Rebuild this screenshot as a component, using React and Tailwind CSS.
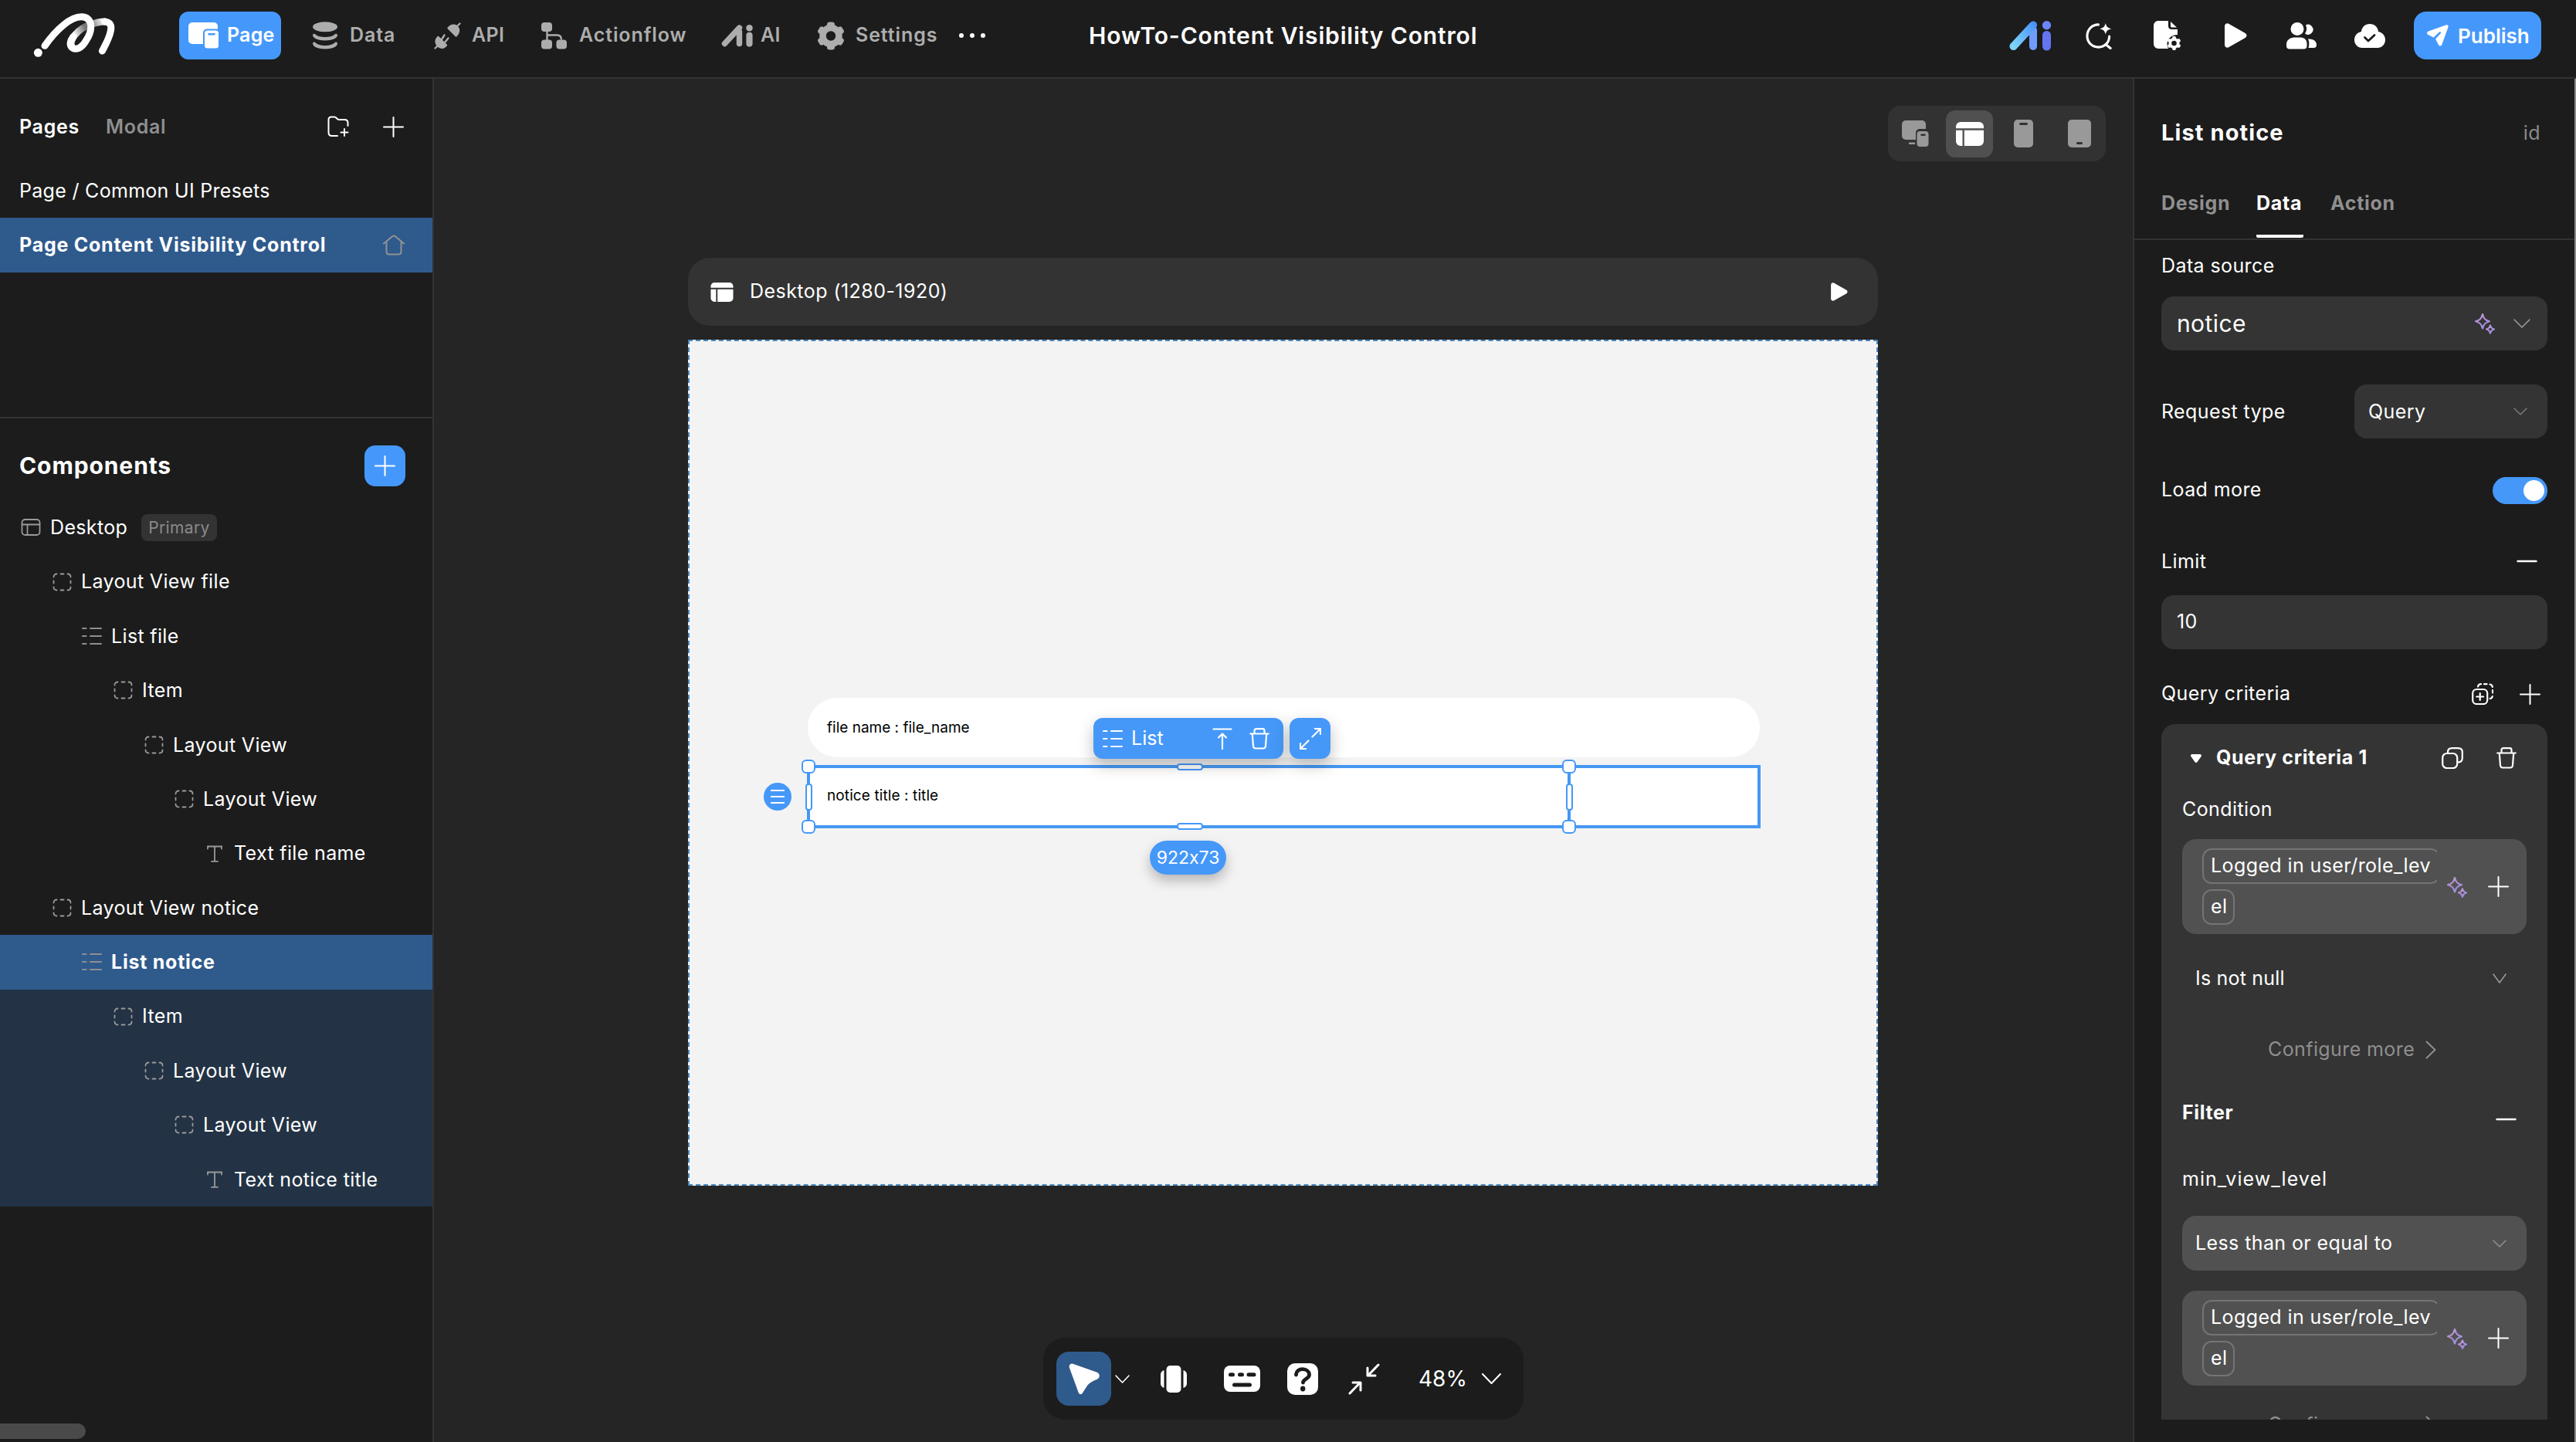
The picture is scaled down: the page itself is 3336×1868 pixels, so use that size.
import React from 'react';

const TREE = [
  { label: 'Desktop', icon: 'desktop', pad: 'pl-[27px]', badge: 'Primary' },
  { label: 'Layout View file', icon: 'view', pad: 'pl-[67px]' },
  { label: 'List file', icon: 'list', pad: 'pl-[106px]' },
  { label: 'Item', icon: 'view', pad: 'pl-[146px]' },
  { label: 'Layout View', icon: 'view', pad: 'pl-[186px]' },
  { label: 'Layout View', icon: 'view', pad: 'pl-[225px]' },
  { label: 'Text file name', icon: 'text', pad: 'pl-[265px]' },
  { label: 'Layout View notice', icon: 'view', pad: 'pl-[67px]' },
  { label: 'List notice', icon: 'list', pad: 'pl-[106px]', state: 'active' },
  { label: 'Item', icon: 'view', pad: 'pl-[146px]', state: 'child' },
  { label: 'Layout View', icon: 'view', pad: 'pl-[186px]', state: 'child' },
  { label: 'Layout View', icon: 'view', pad: 'pl-[225px]', state: 'child' },
  { label: 'Text notice title', icon: 'text', pad: 'pl-[265px]', state: 'child' },
];

const ROW_STYLES = {
  active: 'bg-[#2f5a8c] font-bold tracking-[0.75px]',
  child: 'bg-[#233345]',
};

/* ---------- icons ---------- */

function Plus({ className = '', size = 27, width = 2 }) {
  return (
    <svg className={`shrink-0 ${className}`} width={size} height={size} viewBox="0 0 27 27" fill="none" stroke="currentColor" strokeWidth={width} strokeLinecap="round">
      <path d="M13.5 1v25M1 13.5h25" />
    </svg>
  );
}

function Minus({ className = '' }) {
  return (
    <svg className={`shrink-0 ${className}`} width="27" height="4" viewBox="0 0 27 4" stroke="currentColor" strokeWidth="2.4" strokeLinecap="round">
      <path d="M1.5 2h24" />
    </svg>
  );
}

function Chevron({ className = '', w = 18, h = 10, width = 1.6 }) {
  return (
    <svg className={`shrink-0 ${className}`} width={w} height={h} viewBox={`0 0 ${w} ${h}`} fill="none" stroke="currentColor" strokeWidth={width} strokeLinecap="round" strokeLinejoin="round">
      <path d={`M1 1L${w / 2} ${h - 1}L${w - 1} 1`} />
    </svg>
  );
}

function Sparkles({ className = '' }) {
  return (
    <svg className={`shrink-0 ${className}`} width="28" height="28" viewBox="0 0 28 28" fill="none" stroke="url(#spark)" strokeWidth="2.2" strokeLinejoin="round">
      <defs>
        <linearGradient id="spark" x1="0" y1="0" x2="0.6" y2="1">
          <stop offset="0" stopColor="#c2b4ea" />
          <stop offset="0.45" stopColor="#b18ad0" />
          <stop offset="1" stopColor="#9c93e6" />
        </linearGradient>
      </defs>
      <path d="M11 2C12.3 7.8 14.5 10 20 11.3C14.5 12.6 12.3 15 11 20.5C9.7 15 7.5 12.6 2 11.3C7.5 10 9.7 7.8 11 2Z" />
      <path d="M21 16.5C21.8 19.5 22.8 20.7 26 21.5C22.8 22.3 21.8 23.7 21 26.6C20.2 23.7 19.2 22.3 16 21.5C19.2 20.7 20.2 19.5 21 16.5Z" />
    </svg>
  );
}

function Trash({ className = '' }) {
  return (
    <svg className={`shrink-0 ${className}`} width="26" height="28" viewBox="0 0 26 28" fill="none" stroke="currentColor" strokeWidth="2.2" strokeLinecap="round" strokeLinejoin="round">
      <path d="M1.2 7.5h23.6M6.5 7V3.5C6.5 2 7.500 1.200 9 1.200h8c1.500 0 2.500.8 2.500 2.300V7M3.800 8l1.200 15.500c.2 2 1.300 3 3.200 3h9.600c1.900 0 3-1 3.200-3L22.200 8" />
    </svg>
  );
}

function ListLines({ className = '', size = 26 }) {
  return (
    <svg className={`shrink-0 ${className}`} width={size} height={size} viewBox="0 0 26 26" stroke="currentColor" strokeWidth="2" strokeLinecap="round">
      <path d="M1 3h4.500M11 3h14M1 13h4.500M11 13h14M1 23h4.500M11 23h14" />
    </svg>
  );
}

function TreeIcon({ name }) {
  if (name === 'list') return <ListLines className="text-[#8f8f8f]" />;
  return (
    <svg className="shrink-0 text-[#9a9a9a]" width="26" height="26" viewBox="0 0 26 26" fill="none" stroke="currentColor" strokeWidth="1.8" strokeLinecap="round">
      {name === 'desktop' && (
        <>
          <rect x="1.500" y="3" width="23" height="20" rx="4" />
          <path d="M1.500 9.500h23M8.500 9.500V23" />
        </>
      )}
      {name === 'view' && (
        <path d="M2.500 6.500c0-2.500 1.500-4 4-4M11.500 2.500h4M20.500 2.500c2.500 0 4 1.500 4 4M24.500 11.500v3M24.500 19.500c0 2.500-1.500 4-4 4M15.500 23.500h-4M6.500 23.500c-2.500 0-4-1.500-4-4M2.500 14.500v-3" />
      )}
      {name === 'text' && <path d="M4 6.500V3.500h18v3M13 3.500v19M9 22.800h8" />}
    </svg>
  );
}

function Logo() {
  return (
    <svg className="shrink-0" width="107" height="60" viewBox="67 50 321 180" fill="none" strokeLinecap="round" strokeWidth="27">
      <defs>
        <linearGradient id="fold" gradientUnits="userSpaceOnUse" x1="230" y1="150" x2="345" y2="90">
          <stop offset="0" stopColor="#fff" />
          <stop offset="0.4" stopColor="#777" />
          <stop offset="0.6" stopColor="#777" />
          <stop offset="1" stopColor="#fff" />
        </linearGradient>
      </defs>
      <path d="M217 182C202 162 240 112 290 98C305 92 325 86 345 86" stroke="url(#fold)" />
      <path d="M345 86C368 88 372 103 368 122C363 150 350 172 335 200" stroke="#fff" />
      <path d="M112 180C155 118 215 62 262 68C300 74 298 122 272 160C255 190 232 198 218 187C206 176 212 158 222 145" stroke="#fff" />
      <circle cx="86" cy="207" r="16.500" fill="#fff" />
    </svg>
  );
}

function AiMark({ w, h, colored }) {
  return (
    <svg className="shrink-0" width={w} height={h} viewBox="0 0 54 39" fill="none" strokeLinecap="round" strokeWidth="10">
      {colored && (
        <defs>
          <linearGradient id="aiSlant" gradientUnits="userSpaceOnUse" x1="5" y1="34" x2="33" y2="5">
            <stop offset="0" stopColor="#7fd6fb" />
            <stop offset="1" stopColor="#4a93f8" />
          </linearGradient>
        </defs>
      )}
      <path d="M31 12V33" stroke={colored ? '#6f9cfa' : 'currentColor'} />
      <path d="M5.500 33L31 5.500" stroke={colored ? 'url(#aiSlant)' : 'currentColor'} />
      <path d="M48.500 18.500V33" strokeWidth="11" stroke={colored ? '#6474f2' : 'currentColor'} />
      <circle cx="48.500" cy="5.800" r="5.700" fill={colored ? '#6a86f6' : 'currentColor'} />
    </svg>
  );
}

function PageIcon() {
  return (
    <svg className="shrink-0" width="40" height="34" viewBox="0 0 40 34" fill="currentColor">
      <path d="M5 0h28a5 5 0 0 1 5 5v3.500H24a5 5 0 0 0-5 5V28H5a5 5 0 0 1-5-5V5a5 5 0 0 1 5-5Z" />
      <path fillRule="evenodd" d="M24.500 10.500h11a3.500 3.500 0 0 1 3.500 3.500v16a3.500 3.500 0 0 1-3.500 3.500h-11a3.500 3.500 0 0 1-3.500-3.500V14a3.500 3.500 0 0 1 3.500-3.500Zm2 3.500a1.300 1.300 0 0 0 0 2.600h7a1.300 1.300 0 0 0 0-2.600Z" />
    </svg>
  );
}

function DataIcon() {
  return (
    <svg width="32" height="36" viewBox="0 0 32 36" fill="currentColor">
      <ellipse cx="16" cy="6.800" rx="16" ry="6.500" />
      <path d="M2.800 16C6 19.200 11 20 16 20s10-.8 13.200-4c1.300-.6 2.800.2 2.800 1.500C32 21.500 25 24.500 16 24.500S0 21.500 0 17.500C0 16.200 1.500 15.400 2.800 16Z" />
      <path d="M2.800 26.800C6 30 11 31 16 31s10-1 13.200-4.200c1.300-.6 2.800.2 2.800 1.500C32 32.500 25 35.500 16 35.500S0 32.500 0 28.300C0 27 1.500 26.200 2.800 26.800Z" />
    </svg>
  );
}

function ApiIcon() {
  return (
    <svg width="35" height="35" viewBox="0 0 35 35" fill="currentColor" stroke="currentColor" strokeLinecap="round" strokeLinejoin="round" strokeWidth="2.400">
      <path d="M1.500 33.500L6 29M29.500 5.500L33.500 1.500" fill="none" />
      <path d="M5.500 19L16 29.500C12.500 34 8 33.500 5 30.500C2 27.500 1.500 22.500 5.500 19Z" />
      <path d="M10 22L13.500 16.500M14 26L18.500 20.500" fill="none" />
      <path d="M18.500 7.500L28.500 17.500C33 13.500 33 8.500 30 5.500C27 2.500 22 3 18.500 7.500Z" />
    </svg>
  );
}

function FlowIcon() {
  return (
    <svg width="33" height="35" viewBox="0 0 33 35" fill="currentColor">
      <rect x="0" y="0" width="14" height="12" rx="4" />
      <rect x="0" y="22.500" width="14" height="12" rx="4" />
      <rect x="19.500" y="22.500" width="13.500" height="12" rx="4" />
      <path d="M7.500 10v14M7.500 16.500h13c3.500 0 5.500 2 5.500 6" fill="none" stroke="currentColor" strokeWidth="2.400" />
    </svg>
  );
}

function GearIcon() {
  return (
    <svg width="36" height="37" viewBox="0 0 36 37">
      <circle cx="18" cy="18.500" r="10.500" fill="none" stroke="currentColor" strokeWidth="8.500" />
      {[0, 60, 120, 180, 240, 300].map((deg) => (
        <rect key={deg} x="13" y="0.500" width="10" height="9" rx="3.500" fill="currentColor" transform={`rotate(${deg} 18 18.500)`} />
      ))}
    </svg>
  );
}

function AskIcon() {
  return (
    <svg width="35" height="35" viewBox="0 0 36 36" fill="none" stroke="currentColor" strokeWidth="3.200" strokeLinecap="round">
      <path d="M17 3C8.500 3 2 9.500 2 18s6.500 15 15 15s14.500-6.500 14.500-14.500M27 29.500L33 34.500" />
      <path d="M26.500 1C27.500 5.500 29.500 7.500 34.500 8.500C29.500 9.500 27.500 11.500 26.500 16C25.500 11.500 23.500 9.500 18.500 8.500C23.500 7.500 25.500 5.500 26.500 1Z" fill="currentColor" stroke="none" />
    </svg>
  );
}

function FileGearIcon() {
  return (
    <svg width="36" height="39" viewBox="0 0 36 39" fill="currentColor">
      <path d="M5.500 0H19v6.500c0 3 1.500 4.500 4.500 4.500H31v7c-8 0-14 6-13.500 12.500c.2 2.500 1 4 1.500 5.500H6a6 6 0 0 1-6-6V6a6 6 0 0 1 5.500-6Z" />
      <path d="M22 1L30 8.500h-6c-1.400 0-2-.6-2-2Z" />
      <circle cx="26.500" cy="29" r="5.200" fill="none" stroke="currentColor" strokeWidth="3.800" />
      {[0, 60, 120, 180, 240, 300].map((deg) => (
        <rect key={deg} x="24.300" y="20" width="4.400" height="4" rx="1.200" transform={`rotate(${deg} 26.500 29)`} />
      ))}
    </svg>
  );
}

function PlayIcon({ w = 29, h = 32 }) {
  return (
    <svg width={w} height={h} viewBox="0 0 29 32" fill="currentColor">
      <path d="M0 4C0 1 3 -.7 5.600.9L26.300 12.800c2.900 1.600 2.900 4.800 0 6.400L5.600 31.100C3 32.700 0 31 0 28Z" />
    </svg>
  );
}

function UsersIcon() {
  return (
    <svg width="39" height="35" viewBox="0 0 39 35" fill="currentColor">
      <ellipse cx="14" cy="8.500" rx="8.500" ry="8.500" />
      <path d="M10 19.500h8.500c5 0 8 3.500 8 8.500v2.500c0 2.500-1.500 4-4 4H4c-2.500 0-4-1.500-4-4V28c0-5 5-8.500 10-8.500Z" />
      <path d="M25 3.500a6.500 6.500 0 1 1-1 11c2.500-3.500 2.800-7.500 1-11ZM28 21.500c6.500-.5 11 2.500 11 7.500c0 3-1.500 4-4 4h-6.500c1.500-4.500 1-8.500-.5-11.500Z" />
    </svg>
  );
}

function CloudIcon() {
  return (
    <svg width="40" height="31" viewBox="0 0 40 31">
      <path fill="currentColor" d="M9 10C9.500 4 14 0 20 0s10.500 4 11 10c5 1 9 5 9 10.500C40 26.500 35.500 31 30 31H10C4.500 31 0 26.500 0 20.500C0 15 4 11 9 10Z" />
      <path d="M13.500 17.500l4.500 4.500l8-7.500" fill="none" stroke="#1c1c1c" strokeWidth="2.800" strokeLinecap="round" strokeLinejoin="round" />
    </svg>
  );
}

function SendIcon() {
  return (
    <svg width="28" height="28" viewBox="0 0 28 28" fill="currentColor">
      <path d="M25 .300L2 8.500C-.3 9.400-.5 12 1.500 13L8.500 16.500L16 9.500c1.500-1 2.800.5 1.800 1.800L11 18.500l4 7.500c1 2 3.500 2 4.300-.2L27.500 3C28 1 27-.3 25 .300Z" />
    </svg>
  );
}

function LayoutIcon({ w = 36, h = 31 }) {
  return (
    <svg width={w} height={h} viewBox="0 0 36 31" fill="currentColor">
      <path d="M6 0h24a6 6 0 0 1 6 6v2.300H0V6a6 6 0 0 1 6-6Z" />
      <path d="M0 10.700h8.500V31H6a6 6 0 0 1-6-6ZM10.800 10.700H36V25a6 6 0 0 1-6 6H10.800Z" />
    </svg>
  );
}

/* ---------- header ---------- */

function NavItem({ icon, label, className, iconClass }) {
  return (
    <div className={`flex shrink-0 items-center text-[#adadad] ${className}`}>
      <span className={`shrink-0 ${iconClass}`}>{icon}</span>
      <span>{label}</span>
    </div>
  );
}

function Header() {
  return (
    <header className="flex h-[102px] shrink-0 items-start border-b-2 border-[#333333] bg-[#1c1c1c]">
      <div className="flex h-[92px] w-full items-center pr-[45px] pl-[43px]">
        <Logo />
        <nav className="ml-[82px] flex items-center text-[25px] font-semibold tracking-[0.9px]">
          <div className="mr-[41px] flex h-[62px] w-[132px] items-center gap-[10px] rounded-xl bg-[#4598fb] pl-3 tracking-[0.2px] text-white">
            <PageIcon />
            <span>Page</span>
          </div>
          <NavItem icon={<DataIcon />} label="Data" className="w-[157px]" iconClass="w-12" />
          <NavItem icon={<ApiIcon />} label="API" className="w-[139px] tracking-[0.3px]" iconClass="w-[49px]" />
          <NavItem icon={<FlowIcon />} label="Actionflow" className="w-[233px]" iconClass="w-[49px]" />
          <NavItem icon={<AiMark w={41} h={29} />} label="AI" className="w-[124px] tracking-[0.3px]" iconClass="w-[51px]" />
          <NavItem icon={<GearIcon />} label="Settings" className="w-[184px]" iconClass="w-[50px]" />
          <div className="flex gap-[8px]">
            <i className="size-[6px] rounded-full bg-white" />
            <i className="size-[6px] rounded-full bg-white" />
            <i className="size-[6px] rounded-full bg-white" />
          </div>
        </nav>
        <h1 className="ml-[134px] w-[600px] text-[30px] font-semibold tracking-[0.85px] whitespace-nowrap text-white">HowTo-Content Visibility Control</h1>
        <div className="ml-auto flex items-center text-white">
          <div className="w-[99px]"><AiMark w={54} h={39} colored /></div>
          <div className="w-[88px]"><AskIcon /></div>
          <div className="w-[92px]"><FileGearIcon /></div>
          <div className="w-[80px]"><PlayIcon /></div>
          <div className="w-[88px]"><UsersIcon /></div>
          <div className="w-[77px]"><CloudIcon /></div>
          <button className="flex h-[62px] w-[165px] items-center gap-3 rounded-2xl bg-[#4598fb] pl-[17px] text-[26px] font-semibold">
            <SendIcon />
            Publish
          </button>
        </div>
      </div>
    </header>
  );
}

/* ---------- left sidebar ---------- */

function Sidebar() {
  return (
    <aside className="flex w-[562px] shrink-0 flex-col overflow-hidden border-r-2 border-[#333333] bg-[#1c1c1c] text-[25px] text-white">
      <div className="flex h-[438px] shrink-0 flex-col pt-[28px]">
        <div className="flex h-[68px] items-center pr-[37px] pl-[25px] font-semibold tracking-[0.7px]">
          <span className="w-[112px] pt-[2px]">Pages</span>
          <span className="pt-[2px] text-[#8f8f8f]">Modal</span>
          <svg className="ml-auto" width="28" height="28" viewBox="0 0 28 28" fill="none" stroke="currentColor" strokeWidth="2" strokeLinecap="round" strokeLinejoin="round">
            <path d="M13 26H6c-3 0-4.500-1.500-4.500-4.500V5c0-2.500 1.200-3.500 3.500-3.500h4c3 0 3 3.500 6 3.500h7c3 0 4.500 1.500 4.500 4v4M22 17v9M17.500 21.500h9" />
          </svg>
          <Plus className="ml-[44px]" />
        </div>
        <div className="mt-[14px] flex h-[70px] items-center pt-[2px] pl-[25px] tracking-[0.3px]">Page / Common UI Presets</div>
        <div className="flex h-[71px] items-center justify-between bg-[#2f5a8c] pr-[36px] pl-[25px] font-bold tracking-[0.75px]">
          Page Content Visibility Control
          <svg width="28" height="27" viewBox="0 0 28 27" fill="none" stroke="#8f9296" strokeWidth="2" strokeLinecap="round" strokeLinejoin="round">
            <path d="M1 11.500L12 2.300c1.300-1 2.700-1 4 0L27 11.500M4.500 9v13c0 2 1.500 3.500 3.500 3.500h12c2 0 3.500-1.500 3.500-3.500V9" />
          </svg>
        </div>
      </div>

      <div className="flex h-[108px] shrink-0 items-center justify-between border-t-2 border-[#333333] pt-[16px] pr-[35px] pl-[25px]">
        <h2 className="text-[30px] font-bold tracking-[0.9px]">Components</h2>
        <button className="flex size-[53px] items-center justify-center rounded-[14px] bg-[#4598fb]"><Plus /></button>
      </div>
      <ul className="tracking-[0.35px]">
        {TREE.map((node, i) => (
          <li key={i} className={`flex h-[70.4px] items-center gap-3 ${node.pad} ${ROW_STYLES[node.state] || ''}`}>
            <TreeIcon name={node.icon} />
            <span className="pt-px">{node.label}</span>
            {node.badge && <span className="ml-[6px] rounded-lg bg-[#333333] px-[9px] text-[21px] leading-[35px] text-[#8a8a8a]">{node.badge}</span>}
          </li>
        ))}
      </ul>
      <div className="mt-auto mb-1 h-5 w-[111px] rounded-r-full bg-[#4a4a4a]" />
    </aside>
  );
}

/* ---------- canvas ---------- */

function Knob({ className }) {
  return <span className={`absolute border-2 border-[#4598f8] bg-white ${className}`} />;
}

function Selection() {
  return (
    <div className="absolute top-[549px] left-[152px] h-[82px] w-[1235px] border-4 border-[#4598f2]">
      <Knob className="-top-[11px] -left-[11px] size-[18px] rounded-[6px]" />
      <Knob className="-bottom-[11px] -left-[11px] size-[18px] rounded-[6px]" />
      <span className="absolute -top-[4px] -bottom-[4px] left-[981px] w-[4px] bg-[#4598f2]" />
      <Knob className="-top-[11px] left-[974px] size-[18px] rounded-[6px]" />
      <Knob className="-bottom-[11px] left-[974px] size-[18px] rounded-[6px]" />
      <Knob className="top-[20px] -left-[6px] h-[35px] w-[9px] rounded-[4px]" />
      <Knob className="top-[20px] left-[979px] h-[35px] w-[9px] rounded-[4px]" />
      <Knob className="-top-[6px] left-[475px] h-[9px] w-[34px] rounded-[4px]" />
      <Knob className="-bottom-[6px] left-[475px] h-[9px] w-[34px] rounded-[4px]" />
    </div>
  );
}

function Artboard() {
  return (
    <div className="relative mt-[18px] h-[1096px] w-[1541px] border-2 border-dashed border-[#4a86bf] bg-[#f3f3f3] text-[19px] text-black">
      <div className="mt-[462px] ml-[153px] flex h-[77px] w-[1233px] items-center rounded-[38px] bg-white pt-[2px] pl-[25px]">file name : file_name</div>
      <div className="mt-[11px] ml-[153px] flex h-[79px] w-[1233px] items-center bg-white pl-[25px] tracking-[0.1px]">notice title : title</div>
      <Selection />

      <div className="absolute top-[488px] left-[523px] flex gap-2 text-[25px] text-white">
        <div className="flex h-[53px] w-[246px] items-center rounded-xl bg-[#4598f8] pr-[18px] pl-3 shadow-[0_8px_20px_rgba(0,0,0,0.25)]">
          <ListLines className="mr-[11px]" />
          List
          <svg className="ml-auto" width="26" height="28" viewBox="0 0 26 28" fill="none" stroke="currentColor" strokeWidth="2.200" strokeLinecap="round" strokeLinejoin="round">
            <path d="M1.500 1.500h23M13 27V7.500M8 12.500l5-5l5 5" />
          </svg>
          <Trash className="ml-[22px]" />
        </div>
        <div className="flex h-[53px] w-[53px] items-center justify-center rounded-xl bg-[#4598f8] shadow-[0_8px_20px_rgba(0,0,0,0.25)]">
          <svg width="28" height="28" viewBox="0 0 28 28" fill="none" stroke="currentColor" strokeWidth="2.200" strokeLinecap="round" strokeLinejoin="round">
            <path d="M16.500 11.500L27 1M20 1h7v7M11.500 16.500L1 27M1 20v7h7" />
          </svg>
        </div>
      </div>

      <div className="absolute top-[572px] left-[96px] flex size-[36px] flex-col items-center justify-center gap-[6px] rounded-full bg-[#4598f8]">
        <i className="h-[2px] w-[18px] bg-white" />
        <i className="h-[2px] w-[18px] bg-white" />
        <i className="h-[2px] w-[18px] bg-white" />
      </div>
      <div className="absolute top-[647px] left-[596px] flex h-[44px] w-[99px] items-center justify-center rounded-full bg-[#4598f8] text-[23px] text-white shadow-[0_8px_16px_rgba(0,0,0,0.25)] [font-feature-settings:'calt'_0]">922x73</div>
    </div>
  );
}

function DeviceSwitch() {
  return (
    <div className="flex h-[72px] w-[282px] items-center rounded-2xl bg-[#323232] text-[#999999]">
      <div className="flex w-[75px] pl-[18px]">
        <svg width="35" height="35" viewBox="0 0 35 35" fill="currentColor">
          <path d="M5 0h21a5 5 0 0 1 5 5v6h-8a5 5 0 0 0-5 5v9H5a5 5 0 0 1-5-5V5a5 5 0 0 1 5-5ZM9 28.500h8V31H9Z" />
          <path fillRule="evenodd" d="M23.500 14h7a4 4 0 0 1 4 4v12a4 4 0 0 1-4 4h-7a4 4 0 0 1-4-4V18a4 4 0 0 1 4-4Zm1 3.500v2.500h6v-2.500Z" />
        </svg>
      </div>
      <div className="flex h-[61px] w-[61px] items-center justify-center rounded-xl bg-[#505050] text-white"><LayoutIcon /></div>
      <div className="flex flex-1 items-center justify-between pr-[19px] pl-[27px]">
        <svg width="25" height="36" viewBox="0 0 25 36">
          <rect width="25" height="36" rx="5" fill="currentColor" />
          <rect x="7" y="4" width="11" height="3" rx="1.500" fill="#323232" />
        </svg>
        <svg width="30" height="36" viewBox="0 0 30 36">
          <rect width="30" height="36" rx="5" fill="currentColor" />
          <rect x="11" y="29" width="8" height="3" rx="1.500" fill="#323232" />
        </svg>
      </div>
    </div>
  );
}

function Toolbar() {
  return (
    <div className="flex h-[106px] w-[622px] items-center rounded-[28px] bg-[#1c1c1c] pl-[17px] text-white">
      <div className="flex h-[70px] w-[71px] items-center justify-center rounded-2xl bg-[#2f5a8c]">
        <svg width="40" height="41" viewBox="0 0 40 41" fill="currentColor">
          <path d="M5.500.800L36 11.500c5 1.800 5 7.500.3 9.500c-6 2-10 5-12.300 8l-6 9.500c-1.500 2.500-4.500 2-5.300-.5L.8 5.500C0 2.500 2.500-.2 5.500.800Z" />
        </svg>
      </div>
      <Chevron className="ml-[5px]" w={19} h={11} />
      <svg className="ml-[40px]" width="34" height="35" viewBox="0 0 34 35" fill="currentColor">
        <rect x="7.500" y="0" width="19" height="35" rx="5" />
        <path d="M4.500 6v23C1.500 28 0 26 0 23V12c0-3 1.500-5 4.500-6ZM29.500 6v23c3-1 4.500-3 4.500-6V12c0-3-1.500-5-4.500-6Z" />
      </svg>
      <svg className="ml-[48px]" width="47" height="34" viewBox="0 0 47 34">
        <rect width="47" height="34" rx="8" fill="currentColor" />
        <path d="M8.500 11.700h3M20.500 11.700h3M32 11.700h7M13.500 25h20" stroke="#1c1c1c" strokeWidth="5" strokeLinecap="round" />
      </svg>
      <svg className="ml-[35px]" width="40" height="41" viewBox="0 0 40 41">
        <rect width="40" height="41" rx="10" fill="currentColor" />
        <path d="M11.500 15c0-10 17-9.500 17 0c0 5-8 5.500-8 10" fill="none" stroke="#1c1c1c" strokeWidth="4.800" strokeLinecap="round" />
        <ellipse cx="20.200" cy="33" rx="3.200" ry="3.400" fill="#1c1c1c" />
      </svg>
      <svg className="ml-[39px]" width="41" height="41" viewBox="0 0 41 41" fill="none" stroke="currentColor" strokeWidth="3" strokeLinecap="round" strokeLinejoin="round">
        <path d="M39 2L26 15.500M25 6v10h10M2 39L15 25.500M6 25h10v10" />
      </svg>
      <span className="ml-[50px] w-[82px] text-[28px]">48%</span>
      <Chevron w={25} h={14} width={2} />
    </div>
  );
}

function Canvas() {
  return (
    <main className="flex min-w-0 flex-1 flex-col bg-[#252525] text-[25px] text-white">
      <div className="flex justify-end pt-[35px] pr-[35px]"><DeviceSwitch /></div>
      <div className="mt-[125px] ml-[329px] flex w-[1541px] flex-col">
        <div className="flex h-[88px] items-center rounded-[28px] bg-[#333333] pr-[38px] pl-[29px]">
          <LayoutIcon w={30} h={25} />
          <span className="ml-[21px] tracking-[0.45px]">Desktop (1280-1920)</span>
          <span className="ml-auto"><PlayIcon w={24} h={24} /></span>
        </div>
        <Artboard />
      </div>
      <div className="mt-[197px] ml-[789px]"><Toolbar /></div>
    </main>
  );
}

/* ---------- right panel ---------- */

function ValueBox({ className }) {
  return (
    <div className={`flex h-[123px] shrink-0 items-center rounded-[18px] bg-[#515151] pr-[23px] ${className}`}>
      <div className="ml-[26px] flex h-[99px] w-[304px] flex-col items-start justify-between overflow-hidden">
        <span className="flex h-[46px] w-[308px] shrink-0 items-center rounded-xl border-2 border-[#747474] pl-[9px] whitespace-nowrap">Logged in user/role_lev</span>
        <span className="flex h-[46px] w-[42px] items-center rounded-xl border-2 border-[#747474] pl-[9px]">el</span>
      </div>
      <Sparkles className="ml-[12px]" />
      <Plus className="ml-auto" />
    </div>
  );
}

function ConfigureMore({ className }) {
  return (
    <div className={`flex h-9 shrink-0 items-center pl-[111px] text-[#8f8f8f] ${className}`}>
      <span className="w-[204px]">Configure more</span>
      <svg width="14" height="24" viewBox="0 0 14 24" fill="none" stroke="currentColor" strokeWidth="2" strokeLinecap="round" strokeLinejoin="round">
        <path d="M1.500 1.500L12.500 12L1.500 22.500" />
      </svg>
    </div>
  );
}

function Inspector() {
  return (
    <aside className="flex w-[574px] shrink-0 flex-col border-r-2 border-l-2 border-[#333333] border-r-[#8a8a8a] bg-[#1c1c1c] text-[25px] tracking-[0.4px] text-white">
      <div className="flex h-[140px] shrink-0 items-center justify-between pr-[44px] pl-[35px]">
        <h2 className="text-[29px] font-bold tracking-[1.1px]">List notice</h2>
        <span className="pt-px text-[#8a8a8a]">id</span>
      </div>
      <div className="flex h-[69px] shrink-0 border-b-2 border-[#333333] pl-[35px] leading-[42px] font-bold tracking-[0.7px] text-[#8f8f8f]">
        <span className="w-[123px]">Design</span>
        <span className="h-[66px] w-[61px] rounded-b-[2px] border-b-4 border-white text-white">Data</span>
        <span className="ml-[35px]">Action</span>
      </div>

      <div className="mb-[29px] flex min-h-0 flex-1 flex-col overflow-hidden pr-[35px] pl-[35px]">
        <div className="flex h-[73px] shrink-0 items-center pb-[5px]">Data source</div>
        <div className="flex h-[70px] shrink-0 items-center rounded-2xl bg-[#343434] pr-[22px] pl-5 text-[30px]">
          notice
          <Sparkles className="mr-[23px] ml-auto" />
          <Chevron className="text-[#999999]" w={22} h={12} />
        </div>
        <div className="mt-[44px] flex h-[70px] shrink-0 items-center justify-between">
          <span className="pt-px">Request type</span>
          <div className="flex h-full w-[250px] items-center justify-between rounded-2xl bg-[#343434] pr-[26px] pl-[18px]">
            <span className="pt-px">Query</span>
            <Chevron className="text-[#777777]" />
          </div>
        </div>
        <div className="mt-[49px] flex h-9 shrink-0 items-center justify-between">
          Load more
          <div className="flex h-[35px] w-[71px] items-center justify-end rounded-full bg-[#4598f8] pr-1"><i className="size-[27px] rounded-full bg-white" /></div>
        </div>
        <div className="mt-[56px] flex h-9 shrink-0 items-center justify-between pr-[13px]">
          <span className="pt-px">Limit</span>
          <Minus />
        </div>
        <div className="mt-[26px] flex h-[70px] shrink-0 items-center rounded-2xl bg-[#343434] pl-5">10</div>
        <div className="mt-[40px] flex h-9 shrink-0 items-center pr-[9px]">
          Query criteria
          <svg className="mr-[34px] ml-auto" width="28" height="28" viewBox="0 0 28 28" fill="none" stroke="currentColor" strokeWidth="2.200" strokeLinecap="round">
            <rect x="1.200" y="8" width="19" height="19" rx="5" />
            <path d="M10.700 13v9M6.200 17.500h9M8 4.500C8.500 2.300 10 1.200 12 1.200M16 1.200h3.500M23.500 1.500c2 .3 3.200 1.500 3.300 3.500M27 9v3.500M26.800 17c-.4 1.800-1.500 2.800-3.300 3" />
          </svg>
          <Plus />
        </div>

        <div className="mt-[21px] flex shrink-0 flex-col rounded-t-[18px] bg-[#343434] px-[27px] pt-[26px]">
          <div className="flex h-9 items-center pr-[13px] pl-[11px] font-bold">
            <svg width="14" height="11" viewBox="0 0 14 11" fill="currentColor">
              <path d="M2 0h10c1.800 0 2.500 1.800 1.400 3.200L8.600 10c-.8 1.200-2.400 1.200-3.200 0L.6 3.200C-.5 1.800.2 0 2 0Z" />
            </svg>
            <span className="ml-[19px] tracking-[0.65px]">Query criteria 1</span>
            <svg className="mr-[43px] ml-auto" width="28" height="28" viewBox="0 0 28 28" fill="none" stroke="currentColor" strokeWidth="2.200" strokeLinecap="round">
              <rect x="1.200" y="8" width="19" height="19" rx="5.500" />
              <path d="M8 7.500v-1C8 3 10 1.200 13.500 1.200h7.500C24.800 1.200 26.800 3 26.800 6.500v7c0 3.500-2 6-5.800 6" />
            </svg>
            <Trash />
          </div>
          <div className="mt-[31px] flex h-9 items-center">Condition</div>
          <ValueBox className="mt-5" />
          <div className="mt-[22px] flex h-[70px] items-center justify-between pr-[26px] pl-[17px]">
            <span className="pt-px tracking-[0.2px]">Is not null</span>
            <Chevron className="text-[#999999]" h={13} />
          </div>
          <ConfigureMore className="mt-10" />
          <div className="mt-[46px] flex h-9 items-center justify-between pr-[13px] font-bold tracking-[0.6px]">
            Filter
            <Minus className="mt-[15px]" />
          </div>
          <div className="mt-[49px] flex h-9 items-center pt-px tracking-[1.05px]">min_view_level</div>
          <div className="mt-[30px] flex h-[71px] items-center justify-between rounded-[18px] bg-[#515151] pr-[26px] pl-[17px]">
            Less than or equal to
            <Chevron className="text-[#8f8f8f]" />
          </div>
          <ValueBox className="mt-[26px]" />
          <ConfigureMore className="mt-[33px]" />
        </div>
      </div>
    </aside>
  );
}

function App() {
  return (
    <div className="flex h-[1868px] w-[3336px] flex-col overflow-hidden bg-[#1c1c1c] font-['Inter',sans-serif]">
      <Header />
      <div className="flex min-h-0 flex-1">
        <Sidebar />
        <Canvas />
        <Inspector />
      </div>
    </div>
  );
}

export default App;
